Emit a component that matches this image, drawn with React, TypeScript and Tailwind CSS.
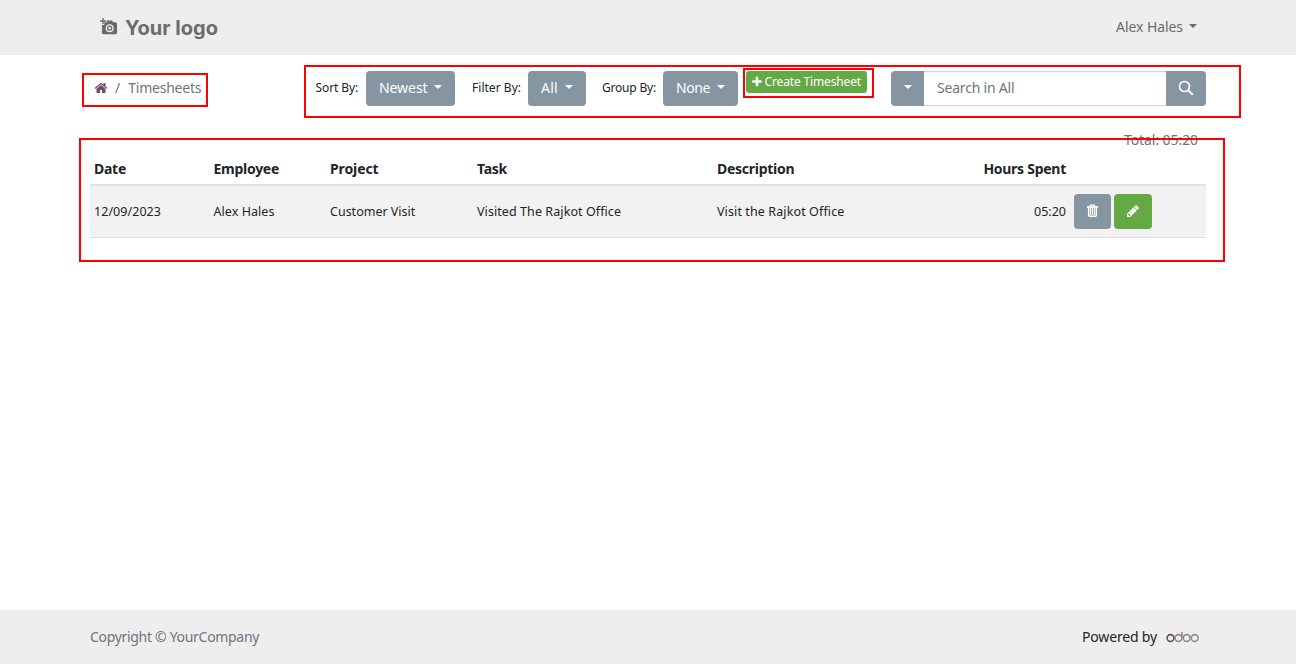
import type { ReactNode } from "react";

type IconProps = { d: string; className: string };

function Glyph({ d, className }: IconProps) {
  return (
    <svg viewBox="0 0 1792 1792" fill="currentColor" className={className} aria-hidden="true">
      <path d={d} />
    </svg>
  );
}

const HOME =
  "M1472 992v480q0 26-19 45t-45 19h-384v-384h-256v384h-384q-26 0-45-19t-19-45v-480q0-1 .5-3t.5-3l575-474 575 474q1 2 1 6zm223-69l-62 74q-8 9-21 11h-3q-13 0-21-7l-692-577-692 577q-12 8-24 7-13-2-21-11l-62-74q-8-10-7-23.5t11-21.5l719-599q32-26 76-26t76 26l244 204v-195q0-14 9-23t23-9h192q14 0 23 9t9 23v408l219 182q10 8 11 21.5t-7 23.5z";
const PLUS =
  "M1600 736v192q0 40-28 68t-68 28h-416v416q0 40-28 68t-68 28h-192q-40 0-68-28t-28-68v-416h-416q-40 0-68-28t-28-68v-192q0-40 28-68t68-28h416v-416q0-40 28-68t68-28h192q40 0 68 28t28 68v416h416q40 0 68 28t28 68z";
const PENCIL =
  "M491 1536l91-91-235-235-91 91v107h128v128h107zm523-928q0-22-22-22-10 0-17 7l-542 542q-7 7-7 17 0 22 22 22 10 0 17-7l542-542q7-7 7-17zm-54-192l416 416-832 832h-416v-416zm683 96q0 53-37 90l-166 166-416-416 166-165q36-38 90-38 53 0 91 38l235 234q37 39 37 91z";

function TrashIcon() {
  return (
    <svg viewBox="0 0 11 13" className="-mt-px h-[13px] w-[11px]" fill="none" stroke="currentColor" aria-hidden="true">
      <path d="M3.500 2.500V1.200h4v1.300" strokeWidth="1.300" />
      <path d="M0 3h11" strokeWidth="1.800" />
      <path d="M1.700 3v8.200q0 1 1 1h5.600q1 0 1-1V3" strokeWidth="1.500" />
      <path d="M3.700 4v7M5.500 4v7M7.300 4v7" strokeWidth="1.100" />
    </svg>
  );
}

function Caret({ className = "" }: { className?: string }) {
  return (
    <svg viewBox="0 0 8 4" fill="currentColor" className={`mb-0.5 h-1 w-2 shrink-0 ${className}`} aria-hidden="true">
      <path d="M0 0h8L4 4z" />
    </svg>
  );
}

function Dropdown({ children, className }: { children: ReactNode; className: string }) {
  return (
    <button className={`flex h-[35px] items-center justify-between rounded-[4px] bg-[#8595a2] px-[13px] pb-0.5 text-white ${className}`}>
      <span>{children}</span>
      <Caret />
    </button>
  );
}

function Outline({ className }: { className: string }) {
  return <div className={`pointer-events-none absolute border-2 border-[#fe0000] ${className}`} />;
}

function Logo() {
  return (
    <a className="relative ml-px flex h-[37px] w-[138px] items-center text-[#6b6b6b]">
      <svg viewBox="0 0 138 37" className="absolute inset-0 h-full w-full" aria-hidden="true">
        <g stroke="#e9e9e9" strokeWidth="1.500">
          <path d="M-4 21 17 0M-4 37 33 0M12 37 49 0M28 37 65 0M44 37 81 0M60 37 97 0M76 37 113 0M92 37 129 0M108 37 142 3M124 37 142 19" />
        </g>
      </svg>
      <svg viewBox="0 0 18 17" className="relative -mt-[2px] ml-[9px] h-[17px] w-[18px]" fill="none" stroke="currentColor" aria-hidden="true">
        <path d="M3 0v6M0 3h6" strokeWidth="1.300" />
        <path
          d="M6.800 2.500H12l1.300 1.700h2.200A1.500 1.500 0 0 1 17 5.700v9a1.500 1.500 0 0 1-1.500 1.500h-12A1.500 1.500 0 0 1 2 14.700V7h2.200V4.200h2.600zM9.700 6.200a4 4 0 1 0 0 8 4 4 0 0 0 0-8z"
          fill="currentColor"
          fillRule="evenodd"
          stroke="none"
        />
        <circle cx="9.700" cy="10.200" r="2" strokeWidth="1.300" />
      </svg>
      <span className="relative ml-[7px] font-['Inter',sans-serif] text-[20px] leading-none font-bold tracking-[0.05px] whitespace-nowrap">Your logo</span>
    </a>
  );
}

function OdooMark() {
  return (
    <svg viewBox="0 0 33 13" className="ml-[9px] h-[13px] w-[33px]" fill="none" strokeWidth="1.600" role="img" aria-label="odoo">
      <g stroke="#8f8f8f">
        <circle cx="12.500" cy="8" r="3.400" />
        <path d="M15.900 8V2" />
        <circle cx="20.700" cy="8" r="3.400" />
        <circle cx="28.700" cy="8" r="3.400" />
      </g>
      <circle cx="4.500" cy="8" r="3.400" stroke="#714b67" />
    </svg>
  );
}

export default function App() {
  return (
    <div className="relative flex h-[664px] w-[1296px] flex-col overflow-hidden bg-white font-['Noto_Sans',sans-serif] text-[14px] leading-[21px] whitespace-nowrap text-[#212529]">
      <header className="flex h-[55px] items-center justify-between bg-[#eeeeee] pr-[99px] pl-[90px]">
        <Logo />
        <button className="flex items-center pb-[2px] text-[#6b6b6b]">
          <span className="tracking-[-0.07px]">Alex Hales</span>
          <Caret className="ml-[6px]" />
        </button>
      </header>

      <main className="flex-1 px-[90px] pt-4">
        <div className="flex h-[35px]">
          <nav className="flex w-[225px] items-center pb-0.5 pl-1 text-[#6c757d]">
            <Glyph d={HOME} className="-ml-[0.500px] h-[14px] w-[14px] text-[#714b67]" />
            <span className="ml-[7.500px]">/</span>
            <span className="ml-[8px] tracking-[-0.23px]">Timesheets</span>
          </nav>
          <div className="flex items-center">
            <span className="w-[51px] pb-0.5 pl-[0.500px] text-[12px] tracking-[-0.11px]">Sort By:</span>
            <Dropdown className="w-[89px] tracking-[-0.07px]">Newest</Dropdown>
            <span className="ml-[17px] w-[56px] pb-0.5 text-[12px] tracking-[0.03px]">Filter By:</span>
            <Dropdown className="w-[58px] tracking-[0.25px]">All</Dropdown>
            <span className="ml-4 w-[61px] pb-0.5 text-[12px] tracking-[-0.2px]">Group By:</span>
            <Dropdown className="w-[75px] tracking-[-0.4px]">None</Dropdown>
          </div>
          <button className="ml-2 flex h-[22px] w-[121px] items-center rounded-[3px] bg-[#65a945] pl-[5px] text-[12px] leading-none text-white">
            <Glyph d={PLUS} className="h-[12px] w-[12px]" />
            <span className="ml-[1.500px] tracking-[-0.145px]">Create Timesheet</span>
          </button>
          <div className="ml-6 flex h-[35px] w-[315px]">
            <button className="flex w-[33px] items-center justify-center rounded-l-[4px] bg-[#8595a2] pb-0.5 text-white">
              <Caret />
            </button>
            <div className="flex w-[242px] items-center border-y border-[#ced4da] pb-0.5 pl-[13px] tracking-[-0.2px] text-[#6c757d]">Search in All</div>
            <button className="flex w-10 items-center justify-center rounded-r-[4px] bg-[#8595a2] text-white">
              <svg viewBox="0 0 16 16" className="-mt-px h-4 w-4" fill="none" stroke="currentColor" strokeWidth="1.700" aria-hidden="true">
                <circle cx="6.500" cy="6.500" r="5" />
                <path d="m10.200 10.200 4.600 4.600" strokeWidth="2" />
              </svg>
            </button>
          </div>
        </div>

        <div className="mt-[23px] flex h-[21px] justify-end pr-2 tracking-[-0.08px] text-[#6c757d]">Total: 05:20</div>

        <table className="mt-1 w-[1116px] table-fixed border-separate border-spacing-0 text-left">
          <colgroup>
            <col className="w-[119.500px]" />
            <col className="w-[116.500px]" />
            <col className="w-[147px]" />
            <col className="w-[240px]" />
            <col className="w-[227px]" />
            <col className="w-[130px]" />
            <col />
          </colgroup>
          <thead>
            <tr className="h-[32px] tracking-[-0.27px] [&>th]:border-b-2 [&>th]:border-[#dee2e6] [&>th]:p-0 [&>th]:pb-0.5 [&>th]:pl-1 [&>th]:font-bold">
              <th>Date</th>
              <th>Employee</th>
              <th><span className="tracking-[-0.11px]">Project</span></th>
              <th>Task</th>
              <th>Description</th>
              <th><div className="pr-1 text-right">Hours Spent</div></th>
              <th />
            </tr>
          </thead>
          <tbody>
            <tr className="h-[52px] bg-[#f2f2f2] text-[12.5px] [&>td]:border-b [&>td]:border-[#dee2e6] [&>td]:p-0 [&>td]:pb-px [&>td]:pl-1">
              <td className="tracking-[0.050px]">12/09/2023</td>
              <td className="tracking-[0.050px]">Alex Hales</td>
              <td>Customer Visit</td>
              <td className="tracking-[0.080px]">Visited The Rajkot Office</td>
              <td className="tracking-[0.110px]">Visit the Rajkot Office</td>
              <td><div className="pr-1 text-right">05:20</div></td>
              <td>
                <div className="flex gap-[3px]">
                  <button className="flex h-[35px] w-[37px] items-center justify-center rounded-[4px] bg-[#8595a2] text-white">
                    <TrashIcon />
                  </button>
                  <button className="flex h-[35px] w-[38px] items-center justify-center rounded-[4px] bg-[#65a945] text-white">
                    <Glyph d={PENCIL} className="h-[14px] w-[14px]" />
                  </button>
                </div>
              </td>
            </tr>
          </tbody>
        </table>
      </main>

      <footer className="flex h-[54px] items-center justify-between bg-[#eeeeee] pr-[97px] pb-0.5 pl-[90px]">
        <span className="tracking-[-0.31px] text-[#6c757d]">Copyright © YourCompany</span>
        <div className="flex items-center">
          <span className="tracking-[-0.17px]">Powered by</span>
          <OdooMark />
        </div>
      </footer>

      <Outline className="top-[73px] left-[82px] h-[34px] w-[126px]" />
      <Outline className="top-[65px] left-[304px] h-[53px] w-[937px]" />
      <Outline className="top-[68px] left-[743px] h-[30px] w-[131px]" />
      <Outline className="top-[138px] left-[79px] h-[124px] w-[1146px]" />
    </div>
  );
}
